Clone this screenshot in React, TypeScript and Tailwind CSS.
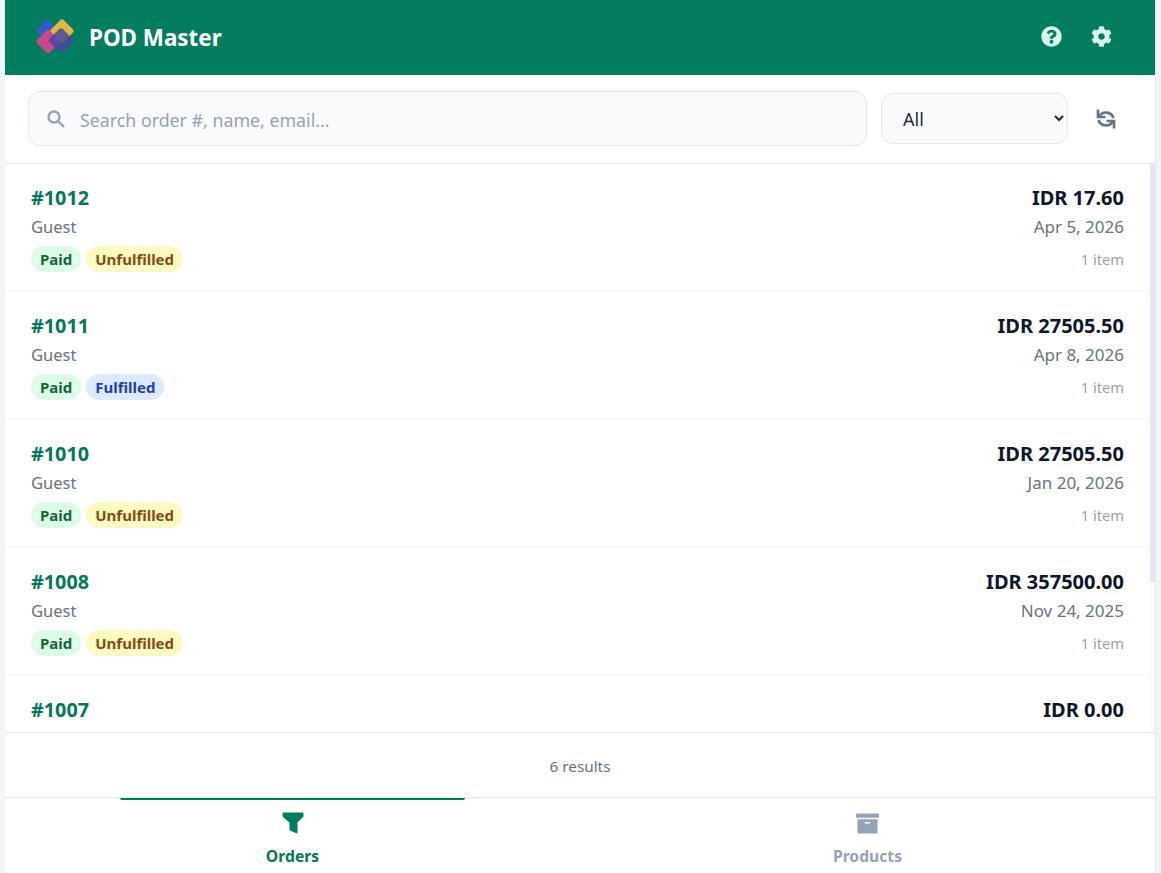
import { FaQuestionCircle, FaCog, FaArchive } from 'react-icons/fa'

const orders = [
  { id: '#1012', total: 'IDR 17.60', date: 'Apr 5, 2026', fulfilled: false },
  { id: '#1011', total: 'IDR 27505.50', date: 'Apr 8, 2026', fulfilled: true },
  { id: '#1010', total: 'IDR 27505.50', date: 'Jan 20, 2026', fulfilled: false },
  { id: '#1008', total: 'IDR 357500.00', date: 'Nov 24, 2025', fulfilled: false },
  { id: '#1007', total: 'IDR 0.00', date: 'Nov 20, 2025', fulfilled: false },
]

function Logo() {
  return (
    <svg width="42" height="38" viewBox="0 0 42 38" className="shrink-0">
      <rect x="5" y="3" width="16" height="16" rx="2" transform="rotate(45 13 11)" fill="#2f5fc4" />
      <rect x="19" y="3" width="18" height="18" rx="3" transform="rotate(45 28 12)" fill="#e2b93b" />
      <rect x="5" y="13.500" width="18" height="18" rx="3" transform="rotate(45 14 22.500)" fill="#d9458a" fillOpacity="0.93" />
      <rect x="17.500" y="12" width="19" height="19" rx="3" transform="rotate(45 27 21.500)" fill="#4b46a0" fillOpacity="0.85" />
    </svg>
  )
}

function SearchIcon() {
  return (
    <svg width="20" height="20" viewBox="0 0 20 20" fill="none" stroke="#94a3b8" strokeWidth="2.400" className="shrink-0 mt-[1px]">
      <circle cx="8" cy="8" r="5.500" />
      <path d="M12 12l6 6" />
    </svg>
  )
}

function SyncIcon() {
  return (
    <svg width="24" height="24" viewBox="0 0 24 24" fill="none" stroke="#64748b" strokeWidth="2.700" className="ml-[26px] mt-[2px]">
      <path d="M4 2.500v7.500h7.500" />
      <path d="M5 10a7.800 7.800 0 0 1 14.500 1" />
      <path d="M20 21.500v-7.500h-7.500" />
      <path d="M19 14a7.800 7.800 0 0 1-14.500-1" />
    </svg>
  )
}

function FunnelIcon() {
  return (
    <svg width="22" height="22" viewBox="0 0 22 22" fill="#047d5f" stroke="#047d5f" strokeWidth="1" strokeLinejoin="round">
      <path d="M1 1h20v3.500l-6 6v10.500l-7-3v-7.500l-7-6z" />
    </svg>
  )
}

function OrderRow({ order }: { order: (typeof orders)[number] }) {
  return (
    <div className="flex justify-between h-[128px] pl-[26px] pr-[31px] pt-[20px] border-b border-[#f1f5f9] shrink-0">
      <div>
        <div className="text-[19.800px] leading-[27px] font-bold text-[#047857]">{order.id}</div>
        <div className="text-[16.500px] leading-[24px] mt-[4px] text-[#64748b]">Guest</div>
        <div className="flex gap-[5px] mt-[7px]">
          <span className="h-[26px] px-[9px] rounded-full bg-[#dcfce7] text-[#166534] text-[15px] leading-[26px] font-bold">Paid</span>
          {order.fulfilled ? (
            <span className="h-[26px] px-[9px] rounded-full bg-[#dbeafe] text-[#1e40af] text-[15px] leading-[26px] font-bold">Fulfilled</span>
          ) : (
            <span className="h-[26px] px-[9px] rounded-full bg-[#fef9c3] text-[#854d0e] text-[15px] leading-[26px] font-bold">Unfulfilled</span>
          )}
        </div>
      </div>
      <div className="text-right">
        <div className="text-[20px] leading-[27px] font-bold text-[#0f172a]">{order.total}</div>
        <div className="text-[17px] leading-[24px] mt-[4px] text-[#64748b]">{order.date}</div>
        <div className="text-[14.700px] leading-[21px] mt-[10px] text-[#94a3b8]">1 item</div>
      </div>
    </div>
  )
}

export default function App() {
  return (
    <div className="h-[873px] overflow-hidden bg-[#f1f5f9] font-['Noto_Sans',sans-serif]">
      <div className="w-[1151px] h-full mx-auto bg-white flex flex-col border-r border-[#e2e8f0]">
        <header className="h-[75px] shrink-0 bg-[#027d5f] flex items-center justify-between pl-[29px] pr-[43px]">
          <div className="flex items-center gap-[13px]">
            <Logo />
            <span className="text-white text-[22.400px] font-bold">POD Master</span>
          </div>
          <div className="flex items-center gap-[29px] text-[#d8f3e8] text-[21px] mt-[-2px]">
            <FaQuestionCircle />
            <FaCog />
          </div>
        </header>

        <div className="h-[89px] shrink-0 flex items-center pl-[23px] pr-[26px] pb-[2px] border-b border-[#e2e8f0]">
          <div className="w-[839px] h-[55px] flex items-center rounded-[12px] border border-[#e2e8f0] bg-[#f8fafc] pl-[17px]">
            <SearchIcon />
            <input
              placeholder="Search order #, name, email..."
              className="ml-[14px] pt-[5px] flex-1 bg-transparent outline-none text-[17.800px] text-[#0f172a] placeholder:text-[#94a3b8]"
            />
          </div>
          <select className="ml-[14px] w-[187px] h-[51px] rounded-[12px] border border-[#e2e8f0] bg-[#f8fafc] pl-[17px] pr-[10px] pt-[1px] text-[18px] text-[#1e293b] outline-none">
            <option>All</option>
          </select>
          <SyncIcon />
        </div>

        <div className="relative h-[568px] shrink-0 overflow-hidden flex flex-col">
          {orders.map((o) => (
            <OrderRow key={o.id} order={o} />
          ))}
          <div className="absolute top-0 right-0 bottom-0 w-[5px] bg-[#f8fafc]">
            <div className="h-[418px] bg-[#e2e8f0]" />
          </div>
        </div>

        <div className="h-[66px] shrink-0 flex items-center justify-center pt-[2px] border-y border-[#e2e8f0] text-[15.300px] text-[#64748b]">
          6 results
        </div>

        <nav className="flex-1 min-h-0 grid grid-cols-2">
          <div className="relative flex flex-col items-center pt-[14px] text-[#047857]">
            <div className="absolute top-0 left-[115px] w-[345px] h-[2px] bg-[#047857] rounded-b-[2px]" />
            <FunnelIcon />
            <span className="mt-[10px] text-[15.700px] leading-[24px] font-bold">Orders</span>
          </div>
          <div className="flex flex-col items-center pt-[14px] text-[#94a3b8]">
            <FaArchive className="text-[23px]" />
            <span className="mt-[9px] text-[15.700px] leading-[24px] font-bold">Products</span>
          </div>
        </nav>
      </div>
    </div>
  )
}
